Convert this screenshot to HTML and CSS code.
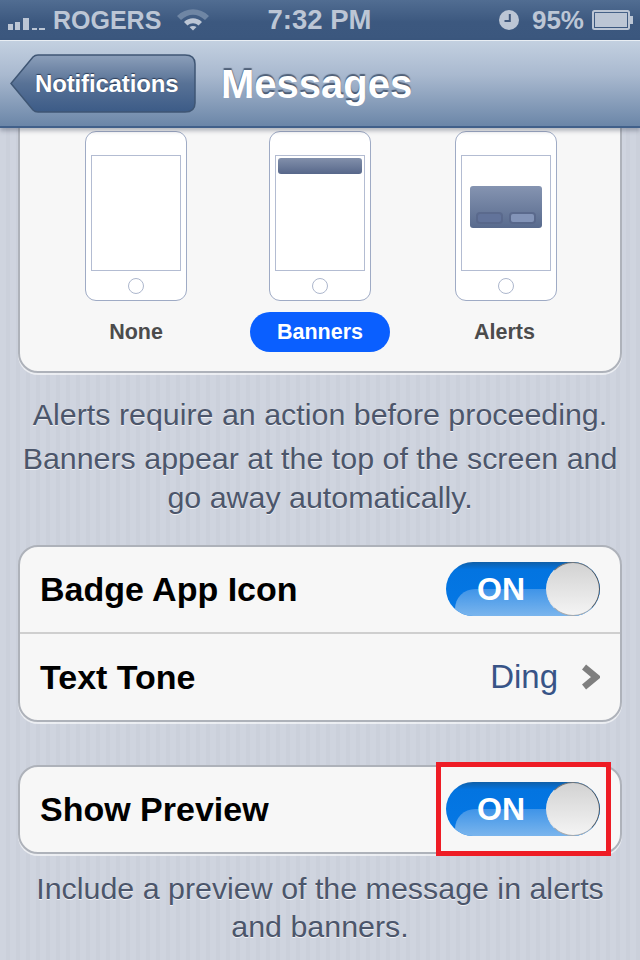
FILE: index.html
```html
<!DOCTYPE html>
<html>
<head>
  <title>Messages</title>
  <link rel="stylesheet" href="styles.css">
</head>
<body>
  <div class="screen">
    <div class="status-bar">
      <div class="status-left">
        <svg class="signal" width="38" height="12" viewBox="0 0 38 12">
          <rect x="0" y="6" width="5" height="6"/>
          <rect x="7" y="4" width="5" height="8"/>
          <rect x="15" y="0" width="6" height="12"/>
          <rect x="24" y="10" width="5" height="2"/>
          <rect x="31" y="10" width="6" height="2"/>
        </svg>
        <span class="carrier">ROGERS</span>
        <svg class="wifi" width="32" height="22" viewBox="0 0 32 22">
          <path class="wifi-dim" d="M0 7 C9 -2 23 -2 32 7 L28 11 C20 4 12 4 4 11 Z"/>
          <path d="M7 13 C12 8 20 8 25 13 L21.500 16.500 C18 13.500 14 13.500 10.500 16.500 Z"/>
          <path d="M12.500 18 C14.500 16.500 17.500 16.500 19.500 18 L16 21.500 Z"/>
        </svg>
      </div>
      <span class="time">7:32 PM</span>
      <div class="status-right">
        <svg class="clock" width="20" height="20" viewBox="0 0 20 20">
          <circle cx="10" cy="10" r="10"/>
          <path class="clock-hand" d="M10.800 4 V11 H5.500"/>
        </svg>
        <span class="percent">95%</span>
        <svg class="battery" width="42" height="20" viewBox="0 0 42 20">
          <rect class="battery-shell" x="1" y="1" width="36" height="18" rx="1.500"/>
          <rect x="3" y="3" width="32" height="14"/>
          <rect x="38" y="6" width="3" height="8"/>
        </svg>
      </div>
    </div>

    <div class="nav-bar">
      <div class="back-button">
        <svg class="back-shape" width="186" height="60" viewBox="0 0 186 60">
          <defs>
            <linearGradient id="back-fill" x1="0" y1="0" x2="0" y2="1">
              <stop offset="0" stop-color="#8c9fba"/>
              <stop offset="0.5" stop-color="#587296"/>
              <stop offset="1" stop-color="#3c5b87"/>
            </linearGradient>
          </defs>
          <path class="back-outline" d="M1 29.500 L23 3 Q25 1 28 1 L175 1 Q185 1 185 10 L185 49 Q185 58 175 58 L28 58 Q25 58 23 56 Z"/>
        </svg>
        <span class="back-label">Notifications</span>
      </div>
      <h1 class="nav-title">Messages</h1>
    </div>

    <div class="content">
      <div class="card style-card">
        <div class="style-option">
          <div class="phone">
            <div class="phone-screen"></div>
            <div class="home-button"></div>
          </div>
          <span class="style-label">None</span>
        </div>
        <div class="style-option">
          <div class="phone">
            <div class="phone-screen">
              <div class="mini-banner"></div>
            </div>
            <div class="home-button"></div>
          </div>
          <span class="style-label selected">Banners</span>
        </div>
        <div class="style-option">
          <div class="phone">
            <div class="phone-screen center">
              <div class="mini-alert">
                <div class="mini-btn"></div>
                <div class="mini-btn light"></div>
              </div>
            </div>
            <div class="home-button"></div>
          </div>
          <span class="style-label">Alerts</span>
        </div>
      </div>

      <p class="note first">Alerts require an action before proceeding.</p>
      <p class="note second">Banners appear at the top of the screen and go away automatically.</p>

      <div class="card group">
        <div class="row">
          <span class="row-label">Badge App Icon</span>
          <div class="switch">
            <span class="switch-text">ON</span>
            <span class="knob"></span>
          </div>
        </div>
        <div class="row">
          <span class="row-label">Text Tone</span>
          <span class="row-value">Ding</span>
          <svg class="chevron" width="18" height="26" viewBox="0 0 18 26">
            <path d="M2 3 L14 13 L2 23"/>
          </svg>
        </div>
      </div>

      <div class="card group preview-group">
        <div class="row">
          <span class="row-label">Show Preview</span>
          <div class="switch">
            <span class="switch-text">ON</span>
            <span class="knob"></span>
          </div>
        </div>
        <div class="highlight"></div>
      </div>

      <p class="note last">Include a preview of the message in alerts and banners.</p>
    </div>
  </div>
</body>
</html>
```

FILE: styles.css
```css
body {
  margin: 0;
  font-family: "Liberation Sans", Arial, sans-serif;
}

.screen {
  width: 640px;
  height: 960px;
  overflow: hidden;
  display: flex;
  flex-direction: column;
  background-color: #cdd2dd;
  background-image: repeating-linear-gradient(90deg, #cfd4df 0, #cfd4df 6px, #cbd0db 6px, #cbd0db 10px);
}

/* Status bar */
.status-bar {
  height: 40px;
  flex-shrink: 0;
  display: flex;
  align-items: center;
  padding: 0 6px 0 8px;
  box-sizing: border-box;
  background: linear-gradient(#516d92, #3c587f 55%, #3b577e);
  color: #bcc6d5;
  font-size: 25px;
  font-weight: bold;
}
.status-left {
  display: flex;
  align-items: center;
  flex: 1;
}
.signal {
  fill: #bcc6d5;
  margin-top: 8px;
}
.carrier {
  margin-left: 7px;
}
.wifi {
  fill: #bcc6d5;
  margin-left: 16px;
}
.wifi-dim {
  fill: #6f86a4;
}
.time {
  font-size: 27.500px;
  margin-right: 3px;
}
.status-right {
  flex: 1;
  display: flex;
  align-items: center;
  justify-content: flex-end;
  gap: 13px;
}
.clock {
  fill: #bcc6d5;
}
.clock-hand {
  fill: none;
  stroke: #42597c;
  stroke-width: 2;
}
.percent {
  font-size: 26px;
  margin-right: -5px;
}
.battery {
  fill: #bcc6d5;
}
.battery-shell {
  fill: none;
  stroke: #bcc6d5;
  stroke-width: 2;
}

/* Nav bar */
.nav-bar {
  height: 88px;
  flex-shrink: 0;
  box-sizing: border-box;
  display: flex;
  align-items: center;
  gap: 25px;
  padding: 1px 0 0 10px;
  position: relative;
  z-index: 2;
  border-top: 1px solid #e9eef4;
  border-bottom: 2px solid #41608a;
  background: linear-gradient(#c3d0e0, #a9b9cf 40%, #6b86a8);
  box-shadow: 0 3px 4px rgba(60, 70, 90, 0.35);
}
.back-button {
  position: relative;
  width: 186px;
  height: 60px;
  display: flex;
  align-items: center;
  padding-left: 25px;
  box-sizing: border-box;
}
.back-shape {
  position: absolute;
  top: 0;
  left: 0;
}
.back-outline {
  fill: url(#back-fill);
  stroke: #3f5674;
  stroke-width: 1.500;
}
.back-label {
  position: relative;
  color: #fff;
  font-size: 24px;
  font-weight: bold;
  letter-spacing: -0.15px;
  text-shadow: 0 -1px 1px rgba(30, 45, 70, 0.8);
}
.nav-title {
  margin: 0;
  color: #fff;
  font-size: 40px;
  font-weight: bold;
  text-shadow: 0 -2px 1px rgba(50, 65, 90, 0.75);
}

/* Content */
.content {
  flex: 1;
  padding: 0 18px;
  overflow: hidden;
}
.card {
  background-color: #f7f7f7;
  border: 2px solid #aeb2ba;
  border-radius: 20px;
  box-shadow: 0 2px 0 rgba(255, 255, 255, 0.6);
}
.style-card {
  height: 264px;
  margin-top: -19px;
  box-sizing: border-box;
  display: flex;
  padding: 20px 0 0 65px;
  gap: 82px;
}
.style-option {
  width: 102px;
  display: flex;
  flex-direction: column;
  align-items: center;
}
.style-option:last-child {
  margin-left: 2px;
}
.style-option:last-child .style-label {
  margin-right: 3px;
}
.phone {
  width: 102px;
  height: 170px;
  box-sizing: border-box;
  flex-shrink: 0;
  background-color: #fff;
  border: 1.500px solid #9fabc5;
  border-radius: 11px;
  padding: 23px 5px 0;
  display: flex;
  flex-direction: column;
  align-items: center;
}
.phone-screen {
  width: 90px;
  height: 116px;
  flex-shrink: 0;
  box-sizing: border-box;
  border: 1px solid #b3bcd2;
  padding: 2px;
}
.phone-screen.center {
  display: flex;
  align-items: center;
  justify-content: center;
  padding-bottom: 14px;
}
.home-button {
  width: 14px;
  height: 14px;
  margin-top: 7px;
  border: 1px solid #adb7cd;
  border-radius: 50%;
}
.mini-banner {
  height: 16px;
  border-radius: 3px;
  background: linear-gradient(#8290ab, #57678a);
}
.mini-alert {
  width: 72px;
  height: 42px;
  flex-shrink: 0;
  box-sizing: border-box;
  padding: 0 8px 6px;
  border-radius: 3px;
  background: linear-gradient(#8594b1, #586a8d);
  display: flex;
  align-items: flex-end;
  gap: 10px;
}
.mini-btn {
  flex: 1;
  height: 8px;
  border-radius: 2px;
  background-color: #62739a;
  box-shadow: 0 0 0 2px rgba(85, 100, 135, 0.7);
}
.mini-btn.light {
  background-color: #8394b8;
}
.style-label {
  margin-top: 11px;
  height: 40px;
  line-height: 40px;
  font-size: 21.500px;
  font-weight: bold;
  color: #4c4c4c;
  white-space: nowrap;
}
.style-label.selected {
  padding: 0 27px;
  border-radius: 20px;
  background-color: #0a5fff;
  color: #fff;
}

.note {
  margin: 0;
  text-align: center;
  font-size: 30.400px;
  color: #4c566b;
  text-shadow: 0 1px 0 rgba(255, 255, 255, 0.7);
}
.note.first {
  margin-top: 26px;
  line-height: 30px;
}
.note.second {
  margin-top: 10px;
  line-height: 39px;
}
.note.last {
  margin-top: 15px;
  line-height: 38px;
}

/* Table groups */
.group {
  margin-top: 28px;
  position: relative;
}
.preview-group {
  margin-top: 43px;
}
.row {
  height: 85px;
  box-sizing: border-box;
  display: flex;
  align-items: center;
  padding: 0 20px;
}
.row + .row {
  height: 88px;
  border-top: 2px solid #cfcfcf;
}
.row-label {
  flex: 1;
  font-size: 34px;
  font-weight: bold;
  color: #000;
}
.row-value {
  font-size: 33px;
  color: #385487;
  margin-right: 24px;
}
.chevron path {
  fill: none;
  stroke: #7f7f7f;
  stroke-width: 6.500;
}
.switch {
  width: 154px;
  height: 54px;
  margin-top: -1px;
  position: relative;
  overflow: hidden;
  display: flex;
  align-items: center;
  padding-left: 31px;
  box-sizing: border-box;
  border-radius: 27px;
  background: linear-gradient(#0f5fa8 0, #0374e0 14%, #0578e6 100%);
}
.switch::before {
  content: "";
  position: absolute;
  left: 9px;
  right: 0;
  top: 27px;
  bottom: 0;
  border-radius: 20px 0 0 0;
  background: linear-gradient(#3f94e8, #7ab5ed);
}
.switch-text {
  position: relative;
  color: #fff;
  font-size: 32px;
  font-weight: bold;
}
.knob {
  position: absolute;
  top: 0;
  right: 0;
  width: 54px;
  height: 54px;
  box-sizing: border-box;
  border-radius: 50%;
  border: 1.500px solid;
  border-color: #777 #555 #aaa #e4e4e4;
  background: linear-gradient(#d2d2d2, #f4f4f4);
}

/* Red annotation box around the second switch */
.highlight {
  position: absolute;
  top: -5px;
  right: 9px;
  width: 175px;
  height: 94px;
  box-sizing: border-box;
  border: 5px solid #ee1c25;
}
```
